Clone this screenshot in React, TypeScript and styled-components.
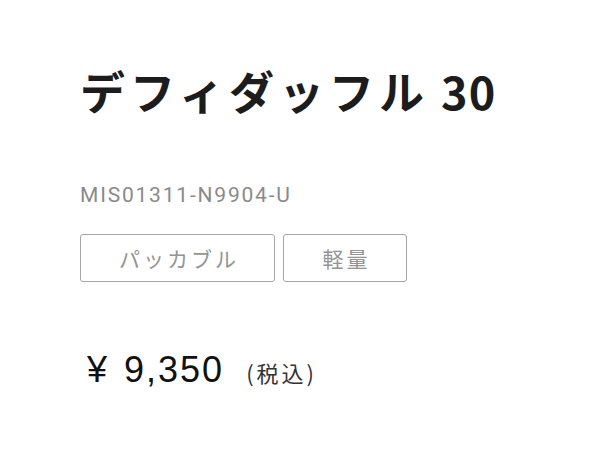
import React from "react";
import styled, { createGlobalStyle } from "styled-components";

const Global = createGlobalStyle`
  html, body { margin: 0; padding: 0; background: #fff; }
  body { font-family: "Noto Sans CJK JP", "Noto Sans", sans-serif; }
`;

const Page = styled.div`
  width: 600px;
  height: 450px;
  box-sizing: border-box;
  padding: 61px 0 0 80px;
  display: flex;
  flex-direction: column;
  align-items: flex-start;
`;

const Title = styled.h1`
  margin: 0;
  font-family: "Noto Sans CJK JP", sans-serif;
  font-weight: 700;
  font-size: 45px;
  line-height: 60px;
  color: #1c1c1c;
  letter-spacing: 5px;
  white-space: nowrap;
`;

const Num = styled.span`
  letter-spacing: 1px;
  margin-left: 12px;
`;

const Sku = styled.div`
  margin-top: 62px;
  font-family: "Roboto", "Noto Sans", sans-serif;
  font-size: 21px;
  line-height: 24px;
  color: #8a8a8a;
  letter-spacing: 1.8px;
`;

const Tags = styled.div`
  display: flex;
  gap: 8px;
  margin-top: 27px;
`;

const Tag = styled.div<{ $w: number }>`
  box-sizing: border-box;
  width: ${(p) => p.$w}px;
  height: 48px;
  border: 1.5px solid #a6a6a6;
  border-radius: 3px;
  display: flex;
  align-items: center;
  justify-content: center;
  padding-left: 3px;
  font-family: "Noto Sans CJK JP", sans-serif;
  font-size: 21px;
  color: #949494;
  letter-spacing: 3px;
`;

const Price = styled.div`
  margin-top: 68px;
  padding-left: 7px;
  display: flex;
  align-items: baseline;
  color: #111;
`;

const Amount = styled.span`
  font-family: "Liberation Sans", Arial, sans-serif;
  font-size: 36px;
  line-height: 40px;
  letter-spacing: 2px;
`;

const Yen = styled.span`
  margin-right: 15px;
`;

const Tax = styled.span`
  margin-left: 22px;
  font-family: "Noto Sans CJK JP", sans-serif;
  font-size: 22px;
  letter-spacing: 3px;
  color: #333;
`;

export default function App() {
  return (
    <>
      <Global />
      <Page>
        <Title>
          デフィダッフル<Num>30</Num>
        </Title>
        <Sku>MIS01311-N9904-U</Sku>
        <Tags>
          <Tag $w={195}>パッカブル</Tag>
          <Tag $w={124}>軽量</Tag>
        </Tags>
        <Price>
          <Amount>
            <Yen>¥</Yen>9,350
          </Amount>
          <Tax>(税込)</Tax>
        </Price>
      </Page>
    </>
  );
}
